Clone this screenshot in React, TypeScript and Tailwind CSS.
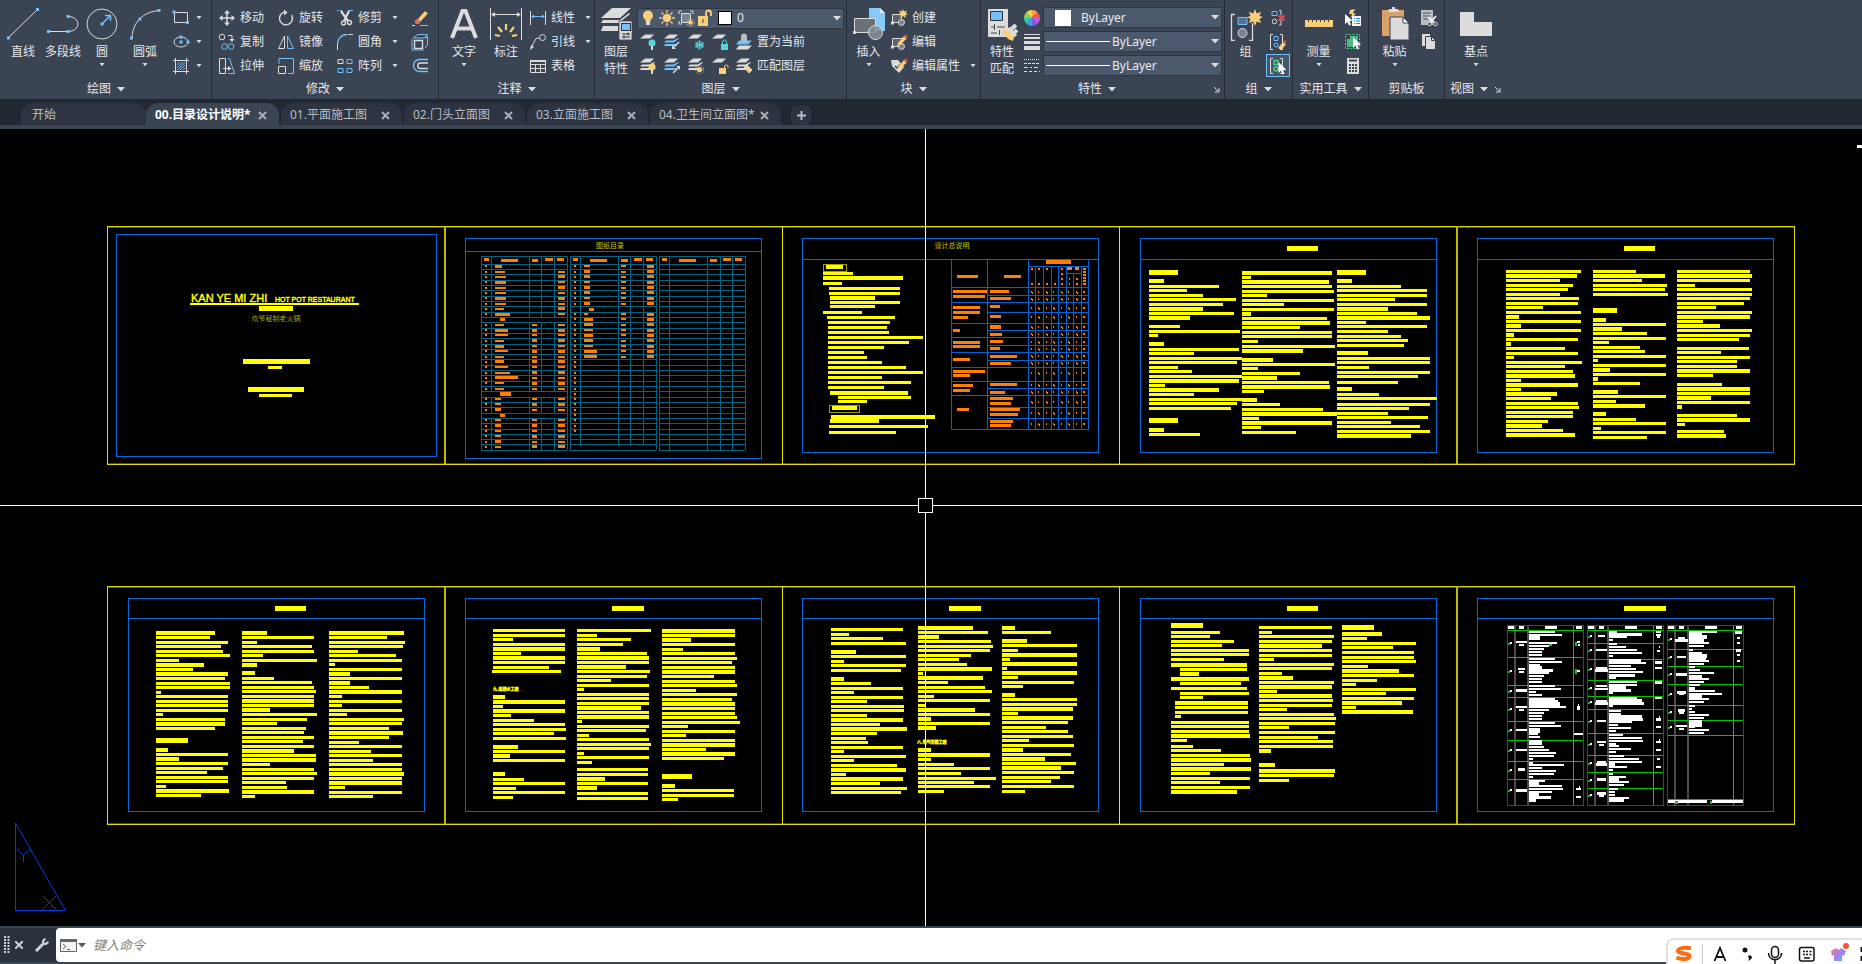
import React from "react";

const W = "#dcdcdc";
const B = "#6fc0fb";
const Y = "#f8d07a";
const C = "#55d6de";
const D = "#3b4453";

/* ---------- generic pieces ---------- */

function Svg({ w = 18, h = 18, children }: { w?: number; h?: number; children: React.ReactNode }) {
  return (
    <svg width={w} height={h} viewBox={`0 0 ${w} ${h}`} fill="none" stroke={W} className="shrink-0" aria-hidden="true">
      {children}
    </svg>
  );
}

function Caret({ big = false }: { big?: boolean }) {
  return big ? (
    <svg width="8" height="5" viewBox="0 0 8 5" className="shrink-0" aria-hidden="true"><path d="M0 0h8L4 4.5z" fill={W} /></svg>
  ) : (
    <svg width="6" height="4" viewBox="0 0 6 4" className="shrink-0" aria-hidden="true"><path d="M0.5 0h5L3 3.2z" fill={W} /></svg>
  );
}

function Group({ title, className, caret = true, launcher = false, children }: { title: string; className: string; caret?: boolean; launcher?: boolean; children: React.ReactNode }) {
  return (
    <section className={`flex shrink-0 flex-col border-r border-[#252b35] ${className}`} aria-label={title}>
      <div className="flex h-20 items-start">{children}</div>
      <div className="flex h-5 items-center">
        <button className="flex flex-1 items-center justify-center gap-1.5 whitespace-nowrap">
          {title}
          {caret && <Caret big />}
        </button>
        {launcher && (
          <button aria-label={`${title}设置`} className="pr-1">
            <svg width="7" height="7" viewBox="0 0 7 7" fill="none" stroke={W} aria-hidden="true"><path d="M1 1l4 4M6 2v4H2" /></svg>
          </button>
        )}
      </div>
    </section>
  );
}

function Big({ icon, lines, className, caret = false }: { icon: React.ReactNode; lines: string[]; className: string; caret?: boolean }) {
  return (
    <button className={`flex shrink-0 flex-col items-center pt-[7px] ${className}`}>
      <span className="flex h-9 items-start justify-center">{icon}</span>
      {lines.map((l) => (
        <span key={l} className="leading-[17px] whitespace-nowrap">{l}</span>
      ))}
      {caret && <span className="flex h-[9px] items-center"><Caret /></span>}
    </button>
  );
}

function Small({ icon, label, name, caret = false }: { icon: React.ReactNode; label?: string; name?: string; caret?: boolean }) {
  return (
    <button aria-label={name ?? label} className="flex h-6 items-center gap-1 whitespace-nowrap">
      {icon}
      {label && <span>{label}</span>}
      {caret && <span className={label ? "pl-1.5" : "pl-0.5"}><Caret /></span>}
    </button>
  );
}

function Col({ className, children }: { className: string; children: React.ReactNode }) {
  return <div className={`flex shrink-0 flex-col items-start pt-1.5 ${className}`}>{children}</div>;
}

function Combo({ name, value, adorn, className }: { name: string; value: string; adorn: React.ReactNode; className: string }) {
  return (
    <label className={`flex h-[21px] w-full items-center border border-[#2e3643] bg-[#4c586c] ${className}`}>
      {adorn}
      <select aria-label={name} className="min-w-0 flex-1 appearance-none bg-transparent text-[12px] leading-4 text-[#e8eaee] outline-none">
        <option>{value}</option>
      </select>
      <span className="pr-0.5"><Caret big /></span>
    </label>
  );
}

/* ---------- ribbon icons ---------- */

const sq = (x: number, y: number, f = B) => <rect x={x - 1.5} y={y - 1.5} width="3" height="3" fill={f} stroke="none" />;

const LineIcon = () => <Svg w={34} h={34}><path d="M3 30L31 3" />{sq(2.5, 31)}{sq(31.5, 2.5)}</Svg>;
const PolyIcon = () => <Svg w={34} h={34}><path d="M2 24.500h20M22 9.500c13 0 13 15 0 15" />{sq(2.500, 24.500)}{sq(22, 9.500)}{sq(22, 24.500)}</Svg>;
const CircleIcon = () => <Svg w={34} h={34}><circle cx="17" cy="17" r="15" /><path d="M17 17l8-8M20 8.500h5.500V14" stroke={B} strokeWidth="1.500" />{sq(17, 17)}</Svg>;
const ArcIcon = () => <Svg w={34} h={34}><path d="M4 30C5 16 14 5 31 3.500" />{sq(3.500, 31)}{sq(12, 12)}{sq(31, 3.500)}</Svg>;
const RectIcon = () => <Svg><path d="M2.500 3.500h13v10h-13z" />{sq(2, 3)}{sq(15.500, 13.500)}</Svg>;
const EllipseIcon = () => <Svg><ellipse cx="9" cy="9" rx="7" ry="5" />{sq(9, 4)}{sq(9, 9)}{sq(16, 9)}</Svg>;
const HatchIcon = () => <Svg><path d="M3.500 1v16M14.500 1v16M1 3.500h16M1 14.500h16" /><path d="M5 8l3-3M5 11l6-6M5 13.500L13 5.500M8 13l5-5M11 13l2-2" stroke={B} /></Svg>;
const MoveIcon = () => <Svg><path d="M9 3v12M3 9h12" strokeWidth="1.500" /><path d="M9 1l3 3.500H6zM9 17l3-3.500H6zM1 9l3.500-3v6zM17 9l-3.500-3v6z" fill={W} stroke="none" /></Svg>;
const CopyIcon = () => <Svg><circle cx="4" cy="4" r="2.800" /><circle cx="6.500" cy="13.500" r="2.800" stroke={B} /><circle cx="13" cy="13.500" r="2.800" stroke={B} /><path d="M10 2.500h4v4" /><path d="M11.500 6h5L14 9z" fill={W} stroke="none" /></Svg>;
const StretchIcon = () => <Svg><path d="M1.500 1.500h6v15h-6zM5 11.500h5" /><path d="M10 9l3.500 2.500L10 14z" fill={W} stroke="none" /><path d="M10 1.500h1.500l5 15H10" stroke={B} /></Svg>;
const RotateIcon = () => <Svg><path d="M7 3.200A6.500 6.500 0 1 0 14.500 6" strokeWidth="1.400" /><path d="M9 0.500v6L5.500 3.500z" fill={W} stroke="none" transform="rotate(180 8 3.500)" /></Svg>;
const MirrorIcon = () => <Svg><path d="M7.500 3v12.500H1.500z" /><path d="M10.500 3v12.500h6z" stroke={B} /></Svg>;
const ScaleIcon = () => <Svg><path d="M2 7V1.500h14.500v15H11" stroke={B} /><path d="M1.500 9.500h7v7h-7z" /></Svg>;
const TrimIcon = () => <Svg><path d="M1 1.500h6" stroke={B} strokeDasharray="2 1" /><path d="M12 1.500h5" stroke={B} /><path d="M5 2l7 10M13 2L8 12" strokeWidth="2.200" /><circle cx="7.500" cy="14" r="2" strokeWidth="1.400" /><circle cx="13.500" cy="13.500" r="2" strokeWidth="1.400" /></Svg>;
const FilletIcon = () => <Svg><path d="M1.500 17V11M12 1.500h5" stroke={W} /><path d="M1.500 11c0-5 4-9.500 9.500-9.500" stroke={B} strokeWidth="1.400" /></Svg>;
const ArrayIcon = () => <Svg><path d="M2 2.500h5v4H2z" /><path d="M11 2.500h5v4h-5zM2 11.500h5v4H2zM11 11.500h5v4h-5z" stroke={B} /></Svg>;
const EraseIcon = () => <Svg><path d="M6 11L14 2l3 2.500L9 13z" fill={Y} stroke="none" /><circle cx="6.500" cy="12.500" r="2.600" fill="#ee6a5e" stroke="none" /><path d="M1 16.500h3" stroke={W} /><path d="M9 16.500h8" stroke={B} /></Svg>;
const ExplodeIcon = () => <Svg><path d="M3.500 7.500h8v8h-8z" strokeWidth="1.400" /><path d="M2 5l5-3.500h9.500L13 5zM14 6l2.500-3v9L14 15M1 6v11h12" stroke={B} /></Svg>;
const OffsetIcon = () => <Svg><path d="M17 2.500H8.500a6 6 0 0 0 0 12H17" stroke={B} strokeWidth="1.400" /><path d="M17 6H9.500a2.700 2.700 0 0 0 0 5.500H17" strokeWidth="1.400" /></Svg>;
const DimIcon = () => (
  <Svg w={34} h={34}>
    <path d="M1.500 1v32M32.500 1v32M3 7.500h28" />
    <path d="M2 7.500l4-2.500v5zM32 7.500l-4-2.500v5z" fill={W} stroke="none" />
    <path d="M17 17v6M9 20l4 5M25 20l-4 5M6 28l5 1M28 28l-5 1" stroke={Y} strokeWidth="2.200" />
  </Svg>
);
const LinearIcon = () => <Svg><path d="M1.500 2v14M16.500 2v14" /><path d="M3 7.500h12" stroke={B} /><path d="M2 7.500l3-2v4zM16 7.500l-3-2v4z" fill={B} stroke="none" /></Svg>;
const LeaderIcon = () => <Svg><circle cx="13.500" cy="4.500" r="3" /><path d="M10.500 5L7 5.500 2 15" /><path d="M1 17l1-5 3 2z" fill={W} stroke="none" /></Svg>;
const TableIcon = () => <Svg><path d="M1.500 3.500h15v12h-15zM1.500 7.500h15M1.500 11.500h15M6.500 7v8M11.500 7v8" /><path d="M1 4h16" strokeWidth="2" /></Svg>;
const LayerPropIcon = () => (
  <Svg w={34} h={34}>
    <g fill={W} stroke="none">
      <path d="M13 1h19L21 11H2z" /><path d="M6 13H4l-2 3h18l11-9-1-1-9 7z" /><path d="M5 19H4l-2 5h17v-5z" />
    </g>
    <rect x="20" y="14" width="13" height="19" fill={W} stroke={D} strokeWidth="0.800" />
    <rect x="22.500" y="16.500" width="9" height="7" fill={B} stroke="#333" />
    <path d="M23 27h8M23 30h8M29 25.500v3M25 28.500v3" stroke="#333" />
  </Svg>
);
const sheet = (y: number, f: string) => <path d={`M6 ${y}h9l-4 4H1z`} fill={f} stroke="none" />;
type Badge = "bulb" | "arrowL" | "arrowR" | "snow" | "sun" | "lock" | "unlock" | "brush" | "user";
function LayerIcon({ badge, stack = 1, tint = W }: { badge: Badge; stack?: number; tint?: string }) {
  const mark: Record<Badge, React.ReactNode> = {
    bulb: <><circle cx="13" cy="10" r="3.500" fill={stack > 1 ? Y : C} stroke="none" /><path d="M13 13v4" strokeWidth="2" /></>,
    arrowL: <><path d="M16 9l-5 5" strokeWidth="1.500" /><path d="M9 16v-4l4 4z" fill={W} stroke="none" /></>,
    arrowR: <><path d="M10 16l5-5" strokeWidth="1.500" /><path d="M17 9v4l-4-4z" fill={W} stroke="none" /></>,
    snow: <><circle cx="12.500" cy="12" r="3.400" stroke={C} strokeWidth="0.800" /><path d="M12.500 7.500v9M8.500 9.500l8 5M8.500 14.500l8-5M8 12h9" stroke={C} strokeWidth="1.100" /></>,
    sun: <><circle cx="12.500" cy="12.500" r="2.600" fill={Y} stroke="none" /><circle cx="12.500" cy="12.500" r="4" stroke={Y} strokeDasharray="1.200 1.600" /></>,
    lock: <><rect x="10" y="11" width="7" height="6" fill={C} stroke="none" /><path d="M11.500 11V9a2 2 0 0 1 4 0v2" stroke={C} /></>,
    unlock: <><rect x="8" y="11" width="7" height="6" fill={Y} stroke="none" /><path d="M13.500 11V9a2 2 0 0 1 3.500 0v2" stroke={Y} /></>,
    brush: <path d="M9 10l5 6 3-3-5-5z" fill={Y} stroke={W} />,
    user: null,
  };
  return (
    <Svg>
      {badge === "user" ? (
        <>
          <path d="M4 12.500h13l-4 4H1z" fill={W} stroke="none" />
          <path d="M4 7.500h13l-4 4H1z" fill={B} stroke="none" />
          <path d="M6 8.500V3.500a3 3 0 0 1 6 0v5z" fill="#b8bcc4" stroke="none" />
        </>
      ) : (
        <>
          {stack > 1 && (
            <>
              <path d="M2 11l-1 2h10l3-2z" fill={tint} stroke="none" />
              <path d="M3 7.500L1 9.500h10l5-4-1-.5-4.500 2.500z" fill={tint} stroke="none" />
            </>
          )}
          {sheet(1.5, W)}
          {mark[badge]}
        </>
      )}
    </Svg>
  );
}
const BulbIcon = () => <Svg><circle cx="9" cy="6.500" r="5" fill={Y} stroke="none" /><path d="M6.500 10h5v3h-5z" fill={Y} stroke="none" /><path d="M7 14.500h4" strokeWidth="3" /></Svg>;
const SunIcon = () => <Svg><circle cx="9" cy="9" r="4.300" fill={Y} stroke="none" /><path d="M9 1v3M9 14v3M1 9h3M14 9h3M3.500 3.500l2 2M12.500 12.500l2 2M14.500 3.500l-2 2M5.500 12.500l-2 2" stroke={Y} strokeWidth="1.300" /></Svg>;
const ViewportIcon = () => <Svg><path d="M4.500 4.500h9v9h-9z" fill="#7b828f" /><path d="M2 5V2h3M13 2h3v3M2 12v3h3" /><circle cx="13.500" cy="13.500" r="2.300" fill={Y} stroke="none" /><circle cx="13.500" cy="13.500" r="3.700" stroke={Y} strokeDasharray="1.200 1.600" /></Svg>;
const UnlockIcon = () => <Svg><rect x="2" y="7" width="10" height="10" fill={Y} stroke="none" /><path d="M10 8V4a2.500 2.500 0 0 1 5 0V7" stroke={Y} strokeWidth="1.800" /><path d="M7 10v4" stroke={D} /></Svg>;

const InsertIcon = () => (
  <Svg w={34} h={34}>
    <path d="M17 1h11l5 5v18H17z" fill="#86c8f8" stroke="none" /><path d="M28 1l5 5h-5z" fill="#dff0fd" stroke="none" />
    <path d="M2.500 11.500h21v14h-21z" fill="#6b6f76" /><circle cx="23.500" cy="25.500" r="7" fill="#8a9096" fillOpacity="0.850" />{sq(2.500, 25.500, W)}
  </Svg>
);
const blockBase = <><path d="M2.500 5.500h9v8h-9z" fill="#5b626e" /><circle cx="11.500" cy="13.500" r="3" fill="#7b828f" />{sq(2.500, 14, W)}</>;
const pencil = <><path d="M8 10l6-7 2.500 2.500-6 6.500-3.500 1z" fill={Y} stroke="none" /><path d="M14 3l1.500-2 2.500 2.500-1.500 2z" fill="#e84a4a" stroke="none" /></>;
const spark = <path d="M13 0l1 2.500 3-1-1.300 2.500 2.300 1.500-2.700.5.200 3-2.500-2-2.500 2 .200-3-2.700-.5L10.300 4 9 1.500l3 1z" fill={Y} stroke="none" />;
const CreateIcon = () => <Svg>{blockBase}{spark}</Svg>;
const EditBlockIcon = () => <Svg>{blockBase}{pencil}</Svg>;
const EditAttrIcon = () => <Svg><path d="M1 3h7l6 7-5 6-7-7z" fill={W} stroke="none" /><path d="M5 9l2 2 4-4" stroke={D} strokeWidth="1.500" />{pencil}</Svg>;

const MatchIcon = () => (
  <Svg w={34} h={34}>
    <path d="M3 2h20v28H3z" fill={W} stroke="none" /><path d="M5.500 4.500h12v9h-12z" fill={B} stroke="#333" />
    <path d="M6 20h3M12 20h8M6 26h6M9.500 17v6M14.500 23v5" stroke="#444" />
    <path d="M17 24l7-2 6 6-2 6-5-2z" fill={Y} stroke="none" /><path d="M24 24l7-6M27 28l5-5" strokeWidth="4" /><path d="M23 21l8 8" strokeWidth="3" />
  </Svg>
);
const wheelColors = ["#f8a040", "#f05a5a", "#c85bd8", "#7a5cf0", "#3c9cf0", "#33c9a0", "#8ad04a", "#f4d84a"];
const WheelIcon = () => (
  <Svg>
    {wheelColors.map((c, i) => {
      const a = (i * Math.PI) / 4;
      const b = a + Math.PI / 4;
      return <path key={c} d={`M9 9L${9 + 8 * Math.sin(a)} ${9 - 8 * Math.cos(a)}A8 8 0 0 1 ${9 + 8 * Math.sin(b)} ${9 - 8 * Math.cos(b)}z`} fill={c} stroke="none" />;
    })}
  </Svg>
);
const WeightIcon = () => <Svg><path d="M1 1.500h16" /><path d="M1 5h16" strokeWidth="2" /><path d="M1 9.500h16" strokeWidth="3" /><path d="M1 15h16" strokeWidth="4" /></Svg>;
const DashIcon = () => <Svg><path d="M1 2.500h16" strokeDasharray="1 1" /><path d="M1 6.500h16" strokeDasharray="3 1" /><path d="M1 10.500h16" strokeDasharray="4 2 2 2" /><path d="M1 14.500h16" strokeDasharray="3 2" /></Svg>;

const brackets = <path d="M4 1.500H1.500v15H4M11 1.500h2.500v15H11" />;
const GroupIcon = () => (
  <Svg w={34} h={34}>
    <path d="M6 7.500H2.500v26H6M20 33.500h3.500V16" strokeWidth="1.300" /><path d="M9 10.500h9v7H9z" fill="#56708c" stroke={B} /><circle cx="13.500" cy="26" r="4.500" fill="#7b828f" />
    <path d="M26 2l1.700 4.500 4.500-1.700-1.800 4.200 3.600 1-3.600 2 1.800 4-4.500-1.500L26 19l-1.700-4.500-4.500 1.500 1.800-4-3.600-2 3.600-1-1.800-4.200 4.500 1.700z" fill={Y} stroke="none" />
  </Svg>
);
const UngroupIcon = () => <Svg><path d="M3 2.500h5v4H3z" stroke={B} /><circle cx="5.500" cy="12.500" r="2.300" /><path d="M10 1.500h2v5M12 11v5h-2" /><path d="M9.500 6.500l6 5M15.500 6.500l-6 5" stroke="#ee4a55" strokeWidth="2" /></Svg>;
const GroupEditIcon = () => <Svg>{brackets}<path d="M5 3.500h4v4H5z" stroke={B} /><circle cx="7" cy="12" r="2" stroke={B} /><path d="M9 15l5-6 3 2.500-5 5.500z" fill={Y} stroke="none" /><path d="M14 8l2-1 1.500 2-1 1.500z" fill="#e84a4a" stroke="none" /></Svg>;
const GroupSelIcon = () => <Svg>{brackets}<path d="M5 3.500h4v4H5z" stroke="#4fd08a" strokeWidth="1.400" /><circle cx="7" cy="12" r="2" stroke="#4fd08a" strokeWidth="1.400" /><path d="M9.500 5v11l2.500-2.500 1.500 4 2-1-1.500-3.500h3.500z" fill="#fff" stroke="none" /></Svg>;
const RulerIcon = () => <Svg w={30} h={34}><path d="M1 13h28v7H1z" fill={Y} stroke="none" /><path d="M4.500 13v2M8.500 13v2M12.500 13v2M16.500 13v2M20.500 13v2M24.500 13v2" stroke={D} /></Svg>;
const QuickSelIcon = () => <Svg><path d="M6 1l5-1-2 4 3 1-5 4 1-4H5z" fill={Y} stroke="none" /><path d="M1 5v10l2.500-2 1.500 3.500 2-1L5.500 12H9z" fill="#fff" stroke="none" /><path d="M8 7h9v10H8z" fill="#f2f6fa" stroke="none" /><path d="M10 9.500h1M12 9.500h4M10 12h1M12 12h4M10 14.500h1M12 14.500h4" stroke="#2c86d0" /></Svg>;
const SelAllIcon = () => <Svg><path d="M1.500 1.500h14v14h-14z" stroke="#4fd08a" strokeDasharray="2 1.500" /><path d="M3 6h3V3h8v9h-3v2H3z" fill="#4fb886" stroke="none" /><path d="M9 4v11l2.500-2.500 1.500 4 2-1-1.500-3.500H17z" fill="#fff" stroke="none" /></Svg>;
const CalcIcon = () => <Svg><path d="M3 1h12v16H3z" fill={W} stroke="none" /><path d="M5 3.500h8" stroke={D} strokeWidth="2" /><path d="M5 8h8M5 11h8M5 14h8" stroke={D} strokeWidth="1.800" strokeDasharray="2 1" /></Svg>;
const PasteIcon = () => (
  <Svg w={30} h={34}>
    <path d="M2 3h22v26H2z" fill="#d8a26a" stroke="none" /><path d="M8 5l1-3h3V0h3v2h3l1 3z" fill={W} stroke="none" />
    <path d="M10 10h13l6 6v17H10z" fill={W} stroke={D} /><path d="M23 10v6h6z" fill="#fff" stroke={D} />
  </Svg>
);
const CutIcon = () => <Svg><path d="M1 1h12v15H1z" fill="#b9bcc2" stroke="none" /><path d="M3 4h8M3 7h7M3 10h5" stroke="#4a5260" /><path d="M8 8l7 6M16 7l-6 7" stroke="#fff" strokeWidth="1.600" /><circle cx="9.500" cy="15" r="1.800" fill={D} /><circle cx="15.500" cy="15" r="1.800" fill={D} /></Svg>;
const CopyClipIcon = () => <Svg><path d="M2 1h8v12H2z" fill={W} stroke="none" /><path d="M5.500 3.500h6l4 4v9h-10z" fill={W} stroke={D} /><path d="M11.500 3.500v4h4" stroke={D} /></Svg>;
const BaseIcon = () => <Svg w={34} h={34}><path d="M1 5h14v10h18v14H1z" fill={W} stroke="none" /></Svg>;

/* ---------- drawing canvas ---------- */

const YEL = "#ffff00";
const ORG = "#ff8000";
const BLU = "#0068d8";

type Scale = { ox: number; oy: number; kx: number };
const px = (s: Scale, x: number) => Math.round(s.ox + x / s.kx);
const gx = (s: Scale, x: number) => Math.floor(s.ox + x / s.kx);
const gy = (s: Scale, y: number) => Math.floor(s.oy + y / 3);
const heights: Record<string, number> = { s: 2, m: 3, t: 4, b: 5 };

/* Each entry reads "centre [left-]right" with an optional height letter. */
function Lines({ s, x = 0, data, fill = YEL, d = "m" }: { s: Scale; x?: number; data: string; fill?: string; d?: string }) {
  const path = data.split(",").map((item) => {
    const [c, span] = item.trim().split(" ");
    const last = span.slice(-1);
    const h = heights[last] ?? heights[d];
    const [a, b] = (last in heights ? span.slice(0, -1) : span).split("-");
    const left = px(s, b ? Number(a) : x);
    const right = px(s, Number(b ?? a));
    const top = Math.round(s.oy + Number(c) / 3 - h / 2);
    return `M${left} ${top}H${right}v${h}H${left}z`;
  });
  return <path d={path.join("")} fill={fill} />;
}

function Grid({ s, h, v, stroke }: { s: Scale; h: number[][]; v: number[][]; stroke: string }) {
  const d = [
    ...h.map(([y, a, b]) => `M${gx(s, a)} ${gy(s, y)}.5H${gx(s, b)}`),
    ...v.map(([x, a, b]) => `M${gx(s, x)}.5 ${gy(s, a)}V${gy(s, b)}`),
  ];
  return <path d={d.join("")} fill="none" stroke={stroke} />;
}

const S1: Scale = { ox: 100, oy: 215, kx: 2.34 };
const S3: Scale = { ox: 770, oy: 215, kx: 3 };
const S4: Scale = { ox: 1110, oy: 215, kx: 2.24 };
const S6: Scale = { ox: 100, oy: 575, kx: 2.34 };
const S8: Scale = { ox: 770, oy: 575, kx: 2.34 };
const S10: Scale = { ox: 1440, oy: 575, kx: 3 };

function Index() {
  const row = (i: number) => 148 + 15.94 * i;
  const merged = [10, 24, 28];
  const sections = [
    [892, 915, 1005, 1034, 1063, 1093],
    [1101, 1124, 1213, 1242, 1272, 1302],
    [1309, 1332, 1422, 1451, 1480, 1511],
  ];
  const h: number[][] = [];
  const v: number[][] = [];
  sections.forEach((c, k) => {
    h.push([124, c[0], c[5]]);
    for (let i = 0; i < 36; i++) if (!(k === 1 && i === 35)) h.push([row(i), c[0], c[5]]);
    h.push([706, c[0], c[5]]);
    v.push([c[0], 124, 706], [c[5], 124, 706]);
    const spans = k === 0 ? [[124, row(10)], [row(11), row(24)], [row(25), row(28)], [row(29), 706]] : [[124, k === 1 ? 689 : 706]];
    c.slice(1, 5).forEach((x) => spans.forEach(([a, b]) => v.push([x, a, b])));
  });
  const a = [941, 948, 950, 950, 950, 950, 950, 950, 945, 960, 0, 945, 955, 955, 945, 945, 955, 945, 945, 955, 960, 978, 945, 945, 0, 938, 938, 938, 0, 938, 938, 938, 938, 938, 938];
  const b = [1147, 1147, 1147, 1147, 1147, 1147, 1147, 1147, 0, 1142, 1154, 1154, 1154, 1154, 1154, 1154, 1163, 1163];
  const cells: string[] = [];
  a.forEach((r, i) => {
    if (merged.includes(i)) return;
    const y = row(i) + 6;
    cells.push(`${y} 901-906s`, `${y} 924-${r}${i % 3 ? "s" : "m"}`);
    if (i > 10) cells.push(`${y} 1011-1023${i % 2 ? "s" : "m"}`);
    if (i > 0) cells.push(`${y} 1072-1088${i % 2 ? "s" : "m"}`);
  });
  for (let i = 0; i < 32; i++) {
    if (i === 8) continue;
    const y = row(i) + 6;
    cells.push(`${y} 1109-1114s`);
    if (b[i]) cells.push(`${y} 1133-${b[i]}${i % 3 ? "m" : "s"}`, `${y} 1219-1231s`, `${y} 1280-1297m`);
  }
  return (
    <>
      <Grid s={S1} h={h} v={v} stroke="#006484" />
      <Lines s={S1} fill={ORG} data={cells.join(",")} />
      <Lines s={S1} fill={ORG} data="313 936-948,537 936-962t,602 936-948,283 1144-1156,133 899-910,136 938-978,136 1011-1026,133 1041-1060,133 1070-1086,133 1107-1119,136 1147-1187,136 1219-1236,133 1250-1268,133 1278-1293,133 1315-1327,136 1355-1395,136 1428-1444,133 1458-1477,133 1486-1502" />
    </>
  );
}

function Overview() {
  const full = [217, 263, 325, 367, 412, 457, 499, 541, 643];
  const sub = [241, 292, 346, 391, 435, 520, 577, 610];
  const marks = [231, 252, 278, 307, 337, 358, 381, 403, 423, 444, 474, 511, 532, 561, 595, 628];
  const cols = [786, 808, 830, 853, 876, 898, 921];
  const dots: string[] = [];
  marks.forEach((y, r) => {
    cols.forEach((x, c) => {
      dots.push(`${y} ${x - 3}-${x}s`);
      if ((c + (r >> 1)) % 2 === 0) dots.push(`${y + 3} ${x}-${x + 3}s`);
    });
    dots.push(`${y} 939-945s`);
  });
  return (
    <>
      <Grid
        s={S3}
        stroke="#0064d4"
        h={[...full.map((y) => [y, 543, 957]), ...sub.map((y) => [y, 653, 956]), [154, 775, 956], [176, 889, 933]]}
        v={[[543, 133, 643], [653, 133, 643], [775, 133, 643], [956, 133, 643], [911, 176, 643], ...[797, 820, 843, 866, 889, 933].map((x) => [x, 154, 643])]}
      />
      <Lines s={S3} fill={ORG} data={dots.join(",")} />
      <Lines
        s={S3}
        fill={ORG}
        data="184 561-624,184 702-753,141 828-903t,229 549-651,244 549-645,229 660-717,250 660-723,274 660-690,277 549-630,292 549-630,307 549-594,304 660-693,336 660-693t,346 549-570,358 660-696,379 660-699,382 549-630,394 549-630,400 660-690,424 660-741,433 549-600,445 660-723,469 549-645,481 549-600,508 660-741,511 549-609,526 549-600,532 660-705,550 660-729,565 660-723,583 561-597,583 660-750,598 660-744,619 660-729,631 660-723,160 891-906,160 915-927,162 783-789s,207 783-789s,162 805-811s,207 805-811s,162 827-833s,207 827-833s,207 852-858s,162 873-879s,177 873-879s,192 873-879s,207 873-879s,192 897-900s,207 897-900s,192 918-924s,207 918-924s,162 939-948s,171 939-948s,180 939-948s,189 939-948s,198 939-948s,207 939-948s"
      />
      <Lines
        s={S3}
        x={174}
        data="156 168-219t,175 159-249,188 159-399t,205 159-216,220 177-390,235 177-390,249 180-315t,262 180-390,274 180-315,292 159-276,307 171-375,322 360,337 351,352 357,367 459,382 417,397 342,412 282,427 291,442 336,457 408,472 459,487 336,502 423,517 342,534 180-414t,547 204-423,559 204-291,579 186-261t,606 183-495t,618 180-327t,634 177-474,652 177-378"
      />
      <path d="M823.5 264.500h23v7h-23zM829.500 405.500h30v7h-30z" fill="none" stroke="#a0a000" />
    </>
  );
}

function Finishes() {
  const bounds = [202, 442, 682];
  const green = [[166, 247, 330, 367, 439, 496, 559, 613], [166, 204, 252, 317, 364, 403, 475, 541, 592, 639], [166, 223, 274, 328, 390, 436, 481, 673]];
  const tags = [[206, 288, 349, 403, 466, 526, 585, 647], [184, 226, 283, 340, 383, 438, 507, 566, 615, 661], [193, 247, 299, 357, 411, 458]];
  return (
    <>
      {bounds.map((x, k) => (
        <g key={x}>
          <path d={`M${px(S10, x + 24)} 625V805M${px(S10, x + 62)} 625V805`} stroke="#4c4c4c" strokeWidth="2" />
          <path d={`M${px(S10, x + 198)}.5 625V805`} stroke="#787878" />
          <Grid s={S10} stroke="#00c400" v={[]} h={green[k].map((y) => [y, x, x + 229])} />
          <Grid s={S10} stroke="#e80000" v={[[x, 151, 690], [x + 228, 151, 690]]} h={[[151, x, x + 230], [690, x, x + 230]]} />
          <Lines s={S10} d="s" fill="#00c020" data={tags[k].map((y) => `${y + 2} ${x + 1}-${x + 8}`).join(",")} />
          <Lines s={S10} d="s" fill="#ffffff" data={tags[k].map((y) => `${y - 1} ${x + 8}-${x + 14}`).join(",")} />
          <Lines s={S10} fill="#ffffff" data={`157 ${x + 2}-${x + 20},157 ${x + 35}-${x + 51},157 ${x + 113}-${x + 149},157 ${x + 206}-${x + 224}`} />
        </g>
      ))}
      <Lines s={S10} x={267} d="s" fill="#ffffff" data="171 345,180 366,190 300t,204 351,212 327,222 312,231 306,240 306,252 345,261 366,270 300,279 306t,287 339m,295 327,303 312,312 306,321 306,333 345,342 363,351 288,360 306,372 345,380 354t,388 360t,396 378,405 327,414 312,423 306,432 306,444 345,453 363,465 300b,477 294,486 300,503 306b,516 312,525 327,534 348,543 342,551 279,563 279,570 372,579 306,588 348,597 342,606 279,618 315,626 297m,633 366,642 369,651 336,659 297m,667 333m,677 288m" />
      <Lines s={S10} x={507} d="s" fill="#ffffff" data="171 531m,179 606m,187 561,195 519,207 531,216 558,225 591,234 606,243 519,257 603t,264 618,273 573,282 588,291 609,300 585m,308 528,321 591,330 591,339 558t,347 573m,355 519,369 591m,378 606t,386 612m,393 519,408 543,417 543m,425 606t,434 609m,442 576,450 534,459 573,468 528,480 549,489 606,498 609,507 528m,514 537,522 573,531 528,543 552,552 597,561 606,569 525t,576 561,585 519,597 519,606 558,614 537m,621 567,630 552,642 534,651 525,660 525,669 567,677 552m" />
      <Lines s={S10} x={747} d="s" fill="#ffffff" data="171 831,179 786m,187 801t,195 792t,204 807,213 792,225 759,234 786,242 801t,250 798t,258 807,267 792,276 765,285 780,294 822,303 786m,311 807,320 792,331 780,340 765m,348 825,357 846,365 786m,373 807,380 792,394 765,403 756,412 765,420 807,428 792,442 786t,450 786m,456 765,465 807,474 792" />
      <Lines s={S10} d="s" fill="#ffffff" data="201 228-261,210 237-252,282 234-255,291 237-252,346 228-261m,396 228-261,405 237-252,465 228-261,525 228-261,583 234-255m,646 228-261m,201 411-420,210 414-420,288 411-420,390 414-417,398 411-420t,477 402-429,636 417-420,642 408-423,666 408-423" />
      <Lines s={S10} d="s" fill="#ffffff" data="183 474-495,225 468-501,280 468-501m,287 465-504m,333 468-501,342 465-504,378 468-501m,386 465-504m,438 471-498,501 471-498,510 477-492,562 471-498m,569 468-501m,613 471-498m,655 471-498m,663 477-492,172 648-663,180 648-663,187 651-660,216 657-660,228 651-660,262 645-666m,279 645-666,322 645-666m,369 645-666,426 657-660,434 648-663m,456 648-663,495 657-660,501 648-663,525 648-663,552 651-660,576 648-663" />
      <Lines s={S10} d="s" fill="#ffffff" data="189 714-735,197 705-744m,246 711-738,298 708-741m,351 711-738m,358 717-732,405 714-735m,413 717-732,453 708-741,462 717-732,172 885-906m,189 891-900,204 891-900,226 888-903m,240 891-900,258 891-900,679 684-801m,679 816-909m" />
      <Lines s={S10} fill="#00d020" data="208 405-411t,289 405-411b,681 810-816m,210 327-336s,681 705-714m" />
    </>
  );
}

const frames = [
  [116, 234, 436, 456, 0], [465, 238, 761, 458, 251], [802, 238, 1098, 452, 259], [1140, 238, 1436, 452, 259], [1477, 238, 1773, 452, 259],
  [128, 598, 424, 811, 618], [465, 598, 761, 811, 618], [802, 598, 1098, 811, 618], [1140, 598, 1436, 811, 618], [1477, 598, 1773, 811, 618],
];

function Drawing() {
  return (
    <svg className="block h-full w-full" shapeRendering="crispEdges" role="img" aria-label="图纸">
      <g transform="translate(0 -129)">
        {[226, 586].map((y) => (
          <g key={y} fill="none">
            <path d={`M107 ${y + 1.5}H1795M107 ${y + 237.5}H1795`} stroke="#505000" />
            <path d={`M107.500 ${y + 0.5}H1794.500V${y + 238.5}H107.500z`} stroke="#dcdc00" />
            <path d={`M782.500 ${y}v238M1119.500 ${y}v238`} stroke="#e6e600" />
            <path d={`M445 ${y}v238M1457 ${y}v238`} stroke="#bcbc00" strokeWidth="2" />
          </g>
        ))}
        {frames.map(([l, t, r, b, m]) => (
          <path key={`${l} ${t}`} d={`M${l}.5 ${t}.5H${r}.5V${b}.5H${l}.5z${m ? `M${l} ${m}.5H${r}` : ""}`} fill="none" stroke={BLU} />
        ))}

        <g fill={YEL} stroke={YEL} strokeWidth="0.400" fontFamily="'Liberation Sans Narrow','Liberation Sans',sans-serif" shapeRendering="auto">
          <text x="191" y="302" fontSize="11">KAN YE MI ZHI</text>
          <text x="275" y="302" fontSize="7">HOT POT RESTAURANT</text>
        </g>
        <g fill="#c8c800" fontFamily="'Noto Sans CJK SC',sans-serif" textAnchor="middle" fontSize="7">
          <text x="276" y="321" fill="#a8a800">坎爷秘制老火锅</text>
          <text x="610" y="248">图纸目录</text>
          <text x="952" y="248">设计总说明</text>
        </g>
        <Lines s={S1} data="267 211-606s,280 372-452b,439 335-491b,457 393-426,523 346-477b,541 372-449" />

        <Index />
        <Overview />

        <Lines s={S4} data="100 396-466b,100 1151-1221b" />
        <Lines s={S4} x={87} data="172 152b,197 121t,214 244,226 172,241 208,253 282,268 253,282 208t,295 278,309 179t,334 157,349 291,361 108,387 121t,403 289,415 188,430 296,442 284,457 152,469 184,484 296,498 289t,511 123,525 244t,538 188,553 296,565 284,580 271,616 152b,645 121t,658 202" />
        <Lines s={S4} x={296} data="174 497t,187 316,201 491t,214 497,229 502,241 352,256 502,268 390,283 502,297 316t,310 486,324 493t,337 426,352 497,364 497,379 332,394 504,408 432t,435 365t,448 504,460 332,475 426,489 374t,502 491,516 493t,529 345,555 329t,568 381,583 477,597 508t,610 334,624 497t,637 338,652 417" />
        <Lines s={S4} x={508} data="172 573b,198 542t,214 652,226 710,241 710,253 638,268 710,282 623t,295 688,309 717t,322 573,334 710,349 623,364 652,376 668,391 659,414 578t,430 717,442 717,457 580,472 717,484 690,502 645,522 542t,538 603,550 732,568 717,580 670,595 623,607 712,622 629,634 694,649 717,663 674t" />
        <Lines s={S4} x={887} data="169 1055,183 1046t,196 1008,211 1037,223 1026,238 1008,250 1051,265 1048,277 970,292 1055,306 916t,319 1055,333 921t,346 1055,360 905t,373 1048,387 898t,400 1019,415 1048,427 905,442 1057,454 1019,469 1037,483 1042t,496 921,510 1048t,523 921,537 1001t,550 988,565 1048,577 1051,592 1037,604 1037,619 981,633 968t,646 1015,660 1042t" />
        <Lines s={S4} x={1082} data="169 1178,183 1243t,196 1192,211 1248,223 1243,238 1250,286 1136b,315 1111t,328 1245,342 1147t,355 1203,370 1245,382 1118,397 1187,409 1198,424 1245,436 1093,451 1245,465 1120t,478 1245,492 1093t,505 1187,531 1138t,544 1245,559 1133,573 1198t,597 1111t,613 1178,625 1245,640 1100,652 1245,667 1203" />
        <Lines s={S4} x={1270} data="169 1434,183 1438t,196 1434,211 1310,223 1438,238 1438,250 1434,265 1420,277 1357,292 1438,306 1434t,319 1328,333 1366t,346 1438,361 1434,373 1409,400 1431,412 1369,427 1434,439 1404,454 1404,468 1434t,481 1351,508 1371,522 1434t,535 1434,549 1346t,562 1434,576 1281t,601 1404,615 1434t,628 1288,649 1375,663 1380t" />

        <Lines s={S6} data="100 410-482b,100 1198-1273b" />
        <Lines s={S6} x={131} data="174 269t,187 257,202 300,214 283,229 288,241 304,256 185,270 243t,283 218,297 300t,310 293,325 304,337 304,352 143,364 300,379 300,391 300,406 300,418 147,433 293,447 293t,460 269,496 206b,525 159t,538 300,552 185t,565 300,580 288,592 250,607 300,619 300,634 154,648 302t,661 236" />
        <Lines s={S6} x={332} data="174 391t,187 501,202 367,214 496,229 501,241 381,256 508,270 367t,294 363t,310 407,322 496,337 501,349 506,364 501,378 501t,391 501,405 398t,418 508,433 484,445 414,460 482,472 477,487 501,499 475,514 501,528 454t,541 506,555 506t,568 398,583 501,595 508,610 501,622 435,637 438,651 501t,664 363" />
        <Lines s={S6} x={536} data="174 711t,187 672,202 714,214 709,229 604,241 693,256 707,268 550,283 707,297 585t,310 707,324 585t,337 630,351 707t,364 566,379 707,391 566,406 707,418 578,433 711,445 707,460 676,474 709t,487 676,502 606,514 707,529 634,541 707,556 639,568 707,583 707,597 711t,610 707,624 707t,637 573,652 707,664 639" />
        <Lines s={S6} x={920} data="166 1088,181 1088,193 967,208 1088,222 1088t,235 985,249 1088t,262 1088,277 1051,289 917-1079,366 948t,381 1088t,394 943,408 1088t,421 962,436 1016,448 1088,463 1091,475 1062,490 1091,516 978t,529 1088,543 960t,556 1088,597 948t,613 992,625 1088,640 974,652 1088,667 967" />
        <Lines s={S6} x={1116} data="166 1290,181 1163,193 1243,208 1224,222 1170t,235 1280,249 1285t,262 1285,276 1231t,289 1287,304 1280,316 1196,331 1285,343 1133,358 1285,370 1285,385 1285,399 1266t,412 1285,426 1285t,439 1128,454 1285,466 1278,481 1144,493 1285,508 1290,520 1285,535 1133,547 1285,562 1151,583 1282,598 1282,612 1182t,625 1282,639 1163t,655 1282,670 1282" />
        <Lines s={S6} x={1315} data="168 1486t,181 1486,195 1383t,208 1486,223 1364,235 1486,250 1491,262 1479,277 1486,291 1486t,304 1437,319 1486,331 1491,346 1395,358 1491,373 1479,387 1486t,400 1486,415 1486,427 1491,442 1498,454 1376,469 1486,481 1371,496 1486,510 1486t,523 1418,537 1486t,550 1460,604 1385b,633 1346t,646 1484,661 1484,673 1353" />

        <Lines s={S8} data="100 419-494b,100 1210-1282b" />
        <Lines s={S8} x={143} data="163 311,178 185,190 264,205 318,231 201t,244 318,259 173,271 318,286 307,312 173t,325 236,340 311,352 197,367 311,379 227,394 314,406 314,421 227,435 311t,448 257,462 321t,475 250,490 225,502 229,517 311,529 173,544 318,556 197,571 297,585 318t,598 178,612 311t,625 257,640 321,652 307" />
        <Lines s={S8} x={346} data="159 475t,172 510,186 396t,199 517,214 522,226 515,241 470,253 442,268 461,282 520t,295 358,309 498t,322 417,337 503,349 520,364 384,376 515,391 365,405 480t,418 515,432 377t,445 515,459 388t,525 377t,540 515t,553 377,568 431,580 515,595 447,610 529,622 477,634 515,649 407" />
        <Lines s={S8} x={543} data="159 573t,172 658,198 601t,211 718,226 580,240 718t,253 562,267 718t,280 555,294 718t,307 580,322 711,334 592,360 573t,373 718,388 718,402 709t,415 580,429 709t,442 697,457 646,469 697,484 709,496 606,511 711,525 592t,538 704,552 644t,565 716,579 681t,592 711,607 679,619 658,634 711,649 597" />
        <Lines s={S8} x={938} data="151 1013b,172 1053,184 1030,199 1086,211 1058,226 1121,238 1121,253 1062,270 1116t,283 960-1116,297 960-1004t,312 1121t,325 960-1102,340 1116,355 960-1121,367 960-1013,384 948-1119t,397 948-1119,412 948-1119,424 948-962,442 1121,454 1121,469 1121,483 1123t,496 976,514 990,526 1055,541 1123,555 1126t,568 1062,582 1126t,595 1030,610 1123,622 1053,637 1123,651 1093t" />
        <Lines s={S8} x={1144} data="157 1315,172 1175,184 1320,199 1315,213 1292t,226 1315,241 1315,253 1180,268 1320,280 1315,295 1198,309 1224t,322 1320,336 1315t,349 1187,363 1315t,376 1318,391 1315,403 1210,418 1320,430 1325,445 1322,457 1215,472 1322,487 1282,499 1318,514 1318,528 1172t,570 1182t,588 1322t,601 1320,616 1215" />
        <Lines s={S8} x={1339} data="157 1414b,177 1432t,190 1397,205 1512,217 1458,232 1507,247 1507,259 1512,274 1399,288 1472t,301 1507,316 1421,328 1371,343 1512,355 1442,370 1507,384 1479t,397 1371,411 1505t" />
        <g fill={YEL} stroke={YEL} strokeWidth="0.300" fontFamily="'Noto Sans CJK SC',sans-serif" fontWeight="900" fontSize="4">
          <text x="493" y="691">九.给排水工程</text>
          <text x="917" y="744">八.电气安装工程</text>
        </g>

        <Lines s={S10} data="100 552-678b" />
        <Finishes />

        <g fill="none" stroke="#0a3ce0" shapeRendering="auto">
          <path d="M15.500 823v87.500H65.500zM17 849l6.500 6 6.500-6M23.500 855v7M43 896l13 13M43 909l13-13" />
        </g>
        <path d="M1857 145h5v3h-5z" fill="#fff" />
      </g>
      <g transform="translate(0 -129)" stroke="#fff" fill="none">
        <path d="M925.500 129V498M925.500 512V926M0 505.500H918M933 505.500H4000" />
        <path d="M918.500 498.500h14v14h-14z" />
      </g>
    </svg>
  );
}

/* ---------- page ---------- */

function Tab({ label, className, active = false, closable = true }: { label: string; className: string; active?: boolean; closable?: boolean }) {
  return (
    <div className={`flex h-[22px] shrink-0 items-center justify-between rounded-t-xl pt-0.5 pr-3 ${active ? "bg-[#3b4453] font-bold text-white" : "bg-[#2d3440] text-[#b9bec7]"} ${className}`}>
      <button role="tab" aria-selected={active} className="whitespace-nowrap">{label}</button>
      {closable && (
        <button aria-label={`关闭 ${label}`}>
          <svg width="9" height="9" viewBox="0 0 9 9" stroke="#a9aeb8" strokeWidth="2" aria-hidden="true"><path d="M1 1l7 7M8 1L1 8" /></svg>
        </button>
      )}
    </div>
  );
}

export default function App() {
  return (
    <div className="flex h-screen min-h-96 flex-col overflow-hidden bg-black font-['Noto_Sans','Noto_Sans_CJK_SC',sans-serif] text-[12px] leading-4 text-[#e4e7ec]">
      <header className="flex h-[99px] shrink-0 overflow-hidden bg-[#3b4453]">
        <Group title="绘图" className="w-[212px] pl-px">
          <Big className="w-[44px]" icon={<LineIcon />} lines={["直线"]} />
          <Big className="w-[36px]" icon={<PolyIcon />} lines={["多段线"]} />
          <Big className="w-[42px]" icon={<CircleIcon />} lines={["圆"]} caret />
          <Big className="w-[44px]" icon={<ArcIcon />} lines={["圆弧"]} caret />
          <Col className="pl-[5px]">
            <Small name="矩形" icon={<RectIcon />} caret />
            <Small name="椭圆" icon={<EllipseIcon />} caret />
            <Small name="图案填充" icon={<HatchIcon />} caret />
          </Col>
        </Group>
        <Group title="修改" className="w-[227px]">
          <Col className="w-[65px] pl-[6px]">
            <Small icon={<MoveIcon />} label="移动" />
            <Small icon={<CopyIcon />} label="复制" />
            <Small icon={<StretchIcon />} label="拉伸" />
          </Col>
          <Col className="w-[59px]">
            <Small icon={<RotateIcon />} label="旋转" />
            <Small icon={<MirrorIcon />} label="镜像" />
            <Small icon={<ScaleIcon />} label="缩放" />
          </Col>
          <Col className="w-[75px]">
            <Small icon={<TrimIcon />} label="修剪" caret />
            <Small icon={<FilletIcon />} label="圆角" caret />
            <Small icon={<ArrayIcon />} label="阵列" caret />
          </Col>
          <Col className="">
            <Small name="删除" icon={<EraseIcon />} />
            <Small name="分解" icon={<ExplodeIcon />} />
            <Small name="偏移" icon={<OffsetIcon />} />
          </Col>
        </Group>
        <Group title="注释" className="w-[156px]">
          <Big className="w-[50px]" icon={<Svg w={34} h={34}><path d="M5 31L15.500 4h3L29 31M9 21.500h16" strokeWidth="4" /></Svg>} lines={["文字"]} caret />
          <Big className="w-[34px]" icon={<DimIcon />} lines={["标注"]} />
          <Col className="pl-[6px]">
            <Small icon={<LinearIcon />} label="线性" caret />
            <Small icon={<LeaderIcon />} label="引线" caret />
            <Small icon={<TableIcon />} label="表格" />
          </Col>
        </Group>
        <Group title="图层" className="w-[252px]">
          <Big className="w-[42px]" icon={<LayerPropIcon />} lines={["图层", "特性"]} />
          <Col className="w-[207px]">
            <div className="flex h-6 w-full items-center">
              <Combo
                name="图层"
                value="0"
                className=""
                adorn={<span className="flex items-center gap-px pr-[5px] pl-px"><BulbIcon /><SunIcon /><ViewportIcon /><UnlockIcon /><span className="ml-[3px] h-3.5 w-3.5 border border-black bg-white" /></span>}
              />
            </div>
            <div className="flex gap-1.5 pl-0.5">
              <Small name="关" icon={<LayerIcon badge="bulb" />} />
              <Small name="隔离" icon={<LayerIcon badge="arrowL" stack={2} tint={B} />} />
              <Small name="冻结" icon={<LayerIcon badge="snow" />} />
              <Small name="锁定" icon={<LayerIcon badge="lock" />} />
              <Small icon={<LayerIcon badge="user" />} label="置为当前" />
            </div>
            <div className="flex gap-1.5 pl-0.5">
              <Small name="打开所有图层" icon={<LayerIcon badge="bulb" stack={2} />} />
              <Small name="取消隔离" icon={<LayerIcon badge="arrowR" stack={2} tint={B} />} />
              <Small name="解冻所有图层" icon={<LayerIcon badge="sun" stack={2} />} />
              <Small name="解锁" icon={<LayerIcon badge="unlock" />} />
              <Small icon={<LayerIcon badge="brush" stack={2} />} label="匹配图层" />
            </div>
          </Col>
        </Group>
        <Group title="块" className="w-[134px]">
          <Big className="w-[43px]" icon={<InsertIcon />} lines={["插入"]} caret />
          <Col className="">
            <Small icon={<CreateIcon />} label="创建" />
            <Small icon={<EditBlockIcon />} label="编辑" />
            <Small icon={<EditAttrIcon />} label="编辑属性" caret />
          </Col>
        </Group>
        <Group title="特性" className="w-[244px]" launcher>
          <Big className="w-[42px]" icon={<MatchIcon />} lines={["特性", "匹配"]} />
          <Col className="w-5">
            <Small name="颜色" icon={<WheelIcon />} />
            <Small name="线宽" icon={<WeightIcon />} />
            <Small name="线型" icon={<DashIcon />} />
          </Col>
          <Col className="w-[179px] gap-[3px]">
            <Combo name="对象颜色" value="ByLayer" className="mt-px" adorn={<span className="mr-2.5 ml-[11px] h-4 w-4 bg-white" />} />
            <Combo name="对象线宽" value="ByLayer" className="" adorn={<span className="mr-0.5 ml-0.5 h-px w-16 bg-white" />} />
            <Combo name="对象线型" value="ByLayer" className="" adorn={<span className="mr-0.5 ml-0.5 h-px w-16 bg-white" />} />
          </Col>
        </Group>
        <Group title="组" className="w-[68px]">
          <Big className="w-[41px]" icon={<GroupIcon />} lines={["组"]} />
          <Col className="w-6">
            <span className="flex w-6 justify-center"><Small name="解除编组" icon={<UngroupIcon />} /></span>
            <span className="flex w-6 justify-center"><Small name="组编辑" icon={<GroupEditIcon />} /></span>
            <button aria-label="启用组选择" aria-pressed="true" className="flex h-[23px] w-6 items-center justify-center border border-[#6fc0fb] bg-[#45566b]"><GroupSelIcon /></button>
          </Col>
        </Group>
        <Group title="实用工具" className="w-[76px]">
          <Big className="w-[51px]" icon={<RulerIcon />} lines={["测量"]} caret />
          <Col className="">
            <Small name="快速选择" icon={<QuickSelIcon />} />
            <Small name="全部选择" icon={<SelAllIcon />} />
            <Small name="快速计算器" icon={<CalcIcon />} />
          </Col>
        </Group>
        <Group title="剪贴板" className="w-[76px]" caret={false}>
          <Big className="w-[51px]" icon={<PasteIcon />} lines={["粘贴"]} caret />
          <Col className="">
            <Small name="剪切" icon={<CutIcon />} />
            <Small name="复制剪裁" icon={<CopyClipIcon />} />
          </Col>
        </Group>
        <section className="flex w-[62px] shrink-0 flex-col" aria-label="视图">
          <div className="flex h-20 items-start"><Big className="w-[62px]" icon={<BaseIcon />} lines={["基点"]} caret /></div>
          <div className="flex h-5 items-center justify-between pr-1.5 pl-[5px]">
            <button className="flex items-center gap-1.5">视图<Caret big /></button>
            <button aria-label="视图设置"><svg width="7" height="7" viewBox="0 0 7 7" fill="none" stroke={W} aria-hidden="true"><path d="M1 1l4 4M6 2v4H2" /></svg></button>
          </div>
        </section>
      </header>

      <nav role="tablist" className="flex h-[30px] shrink-0 items-end border-b-4 border-[#3b4453] bg-[#222831] pl-[21px]">
        <Tab label="开始" className="w-[125px] pl-[11px]" closable={false} />
        <Tab label="00.目录设计说明*" className="w-[133px] pl-[9px]" active />
        <Tab label="01.平面施工图" className="ml-0.5 w-[121px] pl-[9px]" />
        <Tab label="02.门头立面图" className="ml-0.5 w-[121px] pl-[9px]" />
        <Tab label="03.立面施工图" className="ml-0.5 w-[121px] pl-[9px]" />
        <Tab label="04.卫生间立面图*" className="ml-0.5 w-[131px] pl-[9px]" />
        <button aria-label="新图形" className="ml-2.5 flex h-5 w-5 items-center justify-center rounded-md bg-[#2d3440]">
          <svg width="9" height="9" viewBox="0 0 9 9" stroke="#b9bec7" strokeWidth="2" aria-hidden="true"><path d="M4.500 0v9M0 4.500h9" /></svg>
        </button>
      </nav>

      <main className="min-h-0 flex-1 overflow-hidden bg-black"><Drawing /></main>

      <footer className="relative flex h-[38px] shrink-0 border-t-2 border-b-2 border-[#3b4453] bg-[#2b313d]">
        <div className="flex w-14 items-center pl-1">
          <svg width="6" height="18" viewBox="0 0 6 18" fill="none" stroke="#d0d3d8" strokeWidth="2" strokeDasharray="2 1" aria-hidden="true"><path d="M1 0v18M4.500 0v18" /></svg>
          <button aria-label="关闭" className="ml-[5px]"><svg width="8" height="8" viewBox="0 0 8 8" stroke="#d0d3d8" strokeWidth="2" aria-hidden="true"><path d="M0 0l8 8M8 0L0 8" /></svg></button>
          <button aria-label="自定义" className="ml-3">
            <svg width="14" height="14" viewBox="0 0 14 14" fill="none" stroke="#d0d3d8" aria-hidden="true"><path d="M1 13l7-7" strokeWidth="3" /><path d="M10.500 1A3 3 0 0 0 8.500 5.500 3 3 0 0 0 13 3.500" strokeWidth="2.200" /></svg>
          </button>
        </div>
        <div className="flex flex-1 items-center rounded-l-sm bg-white pl-1">
          <button aria-label="近期使用的命令" className="flex items-center gap-px">
            <svg width="17" height="13" viewBox="0 0 17 13" fill="none" stroke="#666" aria-hidden="true"><path d="M.5.5h16v12H.5z" fill="#f4f4f4" /><path d="M0 1.500h17" strokeWidth="3" /><path d="M3 5l3 2.500L3 10M7 10.500h3" /></svg>
            <svg width="8" height="5" viewBox="0 0 8 5" aria-hidden="true"><path d="M0 0h8L4 4.500z" fill="#555" /></svg>
          </button>
          <input aria-label="命令" placeholder="键入命令" className="ml-[7px] min-w-0 flex-1 bg-transparent text-[13px] text-black italic outline-none placeholder:text-[#808080]" />
        </div>
        <div className="absolute right-0 -bottom-0.5 flex h-[26px] w-[196px] items-center overflow-hidden rounded-tl-lg border-t-2 border-l-2 border-[#e2e2e2] bg-white pt-1.5 text-black">
          <svg width="194" height="24" viewBox="1668 940 194 24" fill="none" stroke="#111" strokeWidth="1.500" className="-mt-1.5 shrink-0" role="img" aria-label="输入法">
            <path d="M1691 948.500c-4-1.500-13-1-13 2.500s11.500 1.500 11.500 5-8 4-13 1.500" stroke="#ff6a10" strokeWidth="4" />
            <path d="M1702.500 944v20" stroke="#ccc" strokeWidth="1" />
            <path d="M1714.500 961l5.500-13 5.500 13M1716.500 957h7" strokeWidth="1.800" />
            <circle cx="1745" cy="950" r="2.500" fill="#111" stroke="none" /><path d="M1748 956.500a2 2 0 1 1 3 2.500l-2.500 2 .5-2.500z" fill="#111" stroke="none" />
            <rect x="1771.500" y="946.500" width="7" height="11" rx="3.500" /><path d="M1768.500 953c0 9 13 9 13 0M1775 960v4" />
            <rect x="1799.500" y="947.500" width="14.500" height="13.500" rx="2" /><path d="M1803 951.500h2M1806 951.500h2M1809.500 951.500h2M1803 954.500h2M1806 954.500h2M1809.500 954.500h2M1804 958h6" />
            <defs><linearGradient id="shirt" x1="0" y1="0" x2="1" y2="1"><stop offset="0" stopColor="#ff7a5c" /><stop offset="0.500" stopColor="#a77cf5" /><stop offset="1" stopColor="#4cc0ff" /></linearGradient></defs>
            <path d="M1831 951l5-3c1.500 2 3.500 2 5 0l5 3-2 5-2-1v6h-8v-6l-2 1z" fill="url(#shirt)" stroke="none" />
            <circle cx="1846" cy="946" r="3" fill="#ff5030" stroke="none" />
            <path d="M1861.500 947v5M1861.500 956v5" strokeWidth="2" />
          </svg>
        </div>
      </footer>
    </div>
  );
}
